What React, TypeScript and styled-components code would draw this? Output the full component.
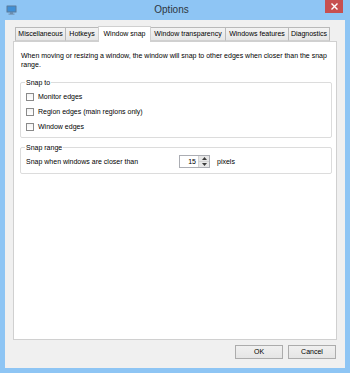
import React from 'react';
import styled, { createGlobalStyle } from 'styled-components';

const GlobalStyle = createGlobalStyle`
  html, body {
    margin: 0;
    padding: 0;
  }
  body {
    font-family: "Liberation Sans", Arial, sans-serif;
    color: #000;
  }
`;

const tabs = [
  { label: 'Miscellaneous', width: 51 },
  { label: 'Hotkeys', width: 34 },
  { label: 'Window snap', width: 53, active: true },
  { label: 'Window transparency', width: 76 },
  { label: 'Windows features', width: 64 },
  { label: 'Diagnostics', width: 42 },
];

const snapTargets = ['Monitor edges', 'Region edges (main regions only)', 'Window edges'];

function AppIcon() {
  return (
    <svg width="11" height="10" viewBox="0 0 11 10">
      <rect x="0.5" y="0.5" width="10" height="7" rx="0.5" fill="#5d7a98" />
      <rect x="1.5" y="1.5" width="8" height="5" fill="#3f8fd6" />
      <rect x="4" y="7.5" width="3" height="1.2" fill="#5d7a98" />
      <rect x="2.5" y="8.6" width="6" height="1" fill="#6f8aa6" />
    </svg>
  );
}

function CloseGlyph() {
  return (
    <svg width="7" height="7" viewBox="0 0 7 7">
      <path d="M1 1 L6 6 M6 1 L1 6" stroke="#fff" strokeWidth="1.4" strokeLinecap="square" />
    </svg>
  );
}

function Arrow({ down }: { down?: boolean }) {
  return (
    <svg width="5" height="3" viewBox="0 0 5 3">
      <path d={down ? 'M0 0 L5 0 L2.5 3 Z' : 'M0 3 L5 3 L2.5 0 Z'} fill="#3c3c3c" />
    </svg>
  );
}

export default function App() {
  return (
    <>
      <GlobalStyle />
      <Window>
        <TitleBar>
          <IconSlot>
            <AppIcon />
          </IconSlot>
          <Title>Options</Title>
          <CloseButton>
            <CloseGlyph />
          </CloseButton>
        </TitleBar>

        <Client>
          <TabStrip>
            {tabs.map((t) => (
              <Tab key={t.label} $w={t.width} $active={!!t.active}>
                {t.label}
              </Tab>
            ))}
          </TabStrip>

          <Panel>
            <Description>
              When moving or resizing a window, the window will snap to other edges when closer than the snap
              <br />
              range.
            </Description>

            <Group>
              <Legend>Snap to</Legend>
              {snapTargets.map((label) => (
                <CheckRow key={label}>
                  <CheckBox />
                  <span>{label}</span>
                </CheckRow>
              ))}
            </Group>

            <Group $gap={5}>
              <Legend>Snap range</Legend>
              <RangeRow>
                <RangeLabel>Snap when windows are closer than</RangeLabel>
                <Spinner>
                  <SpinValue>15</SpinValue>
                  <SpinButtons>
                    <SpinHalf>
                      <Arrow />
                    </SpinHalf>
                    <SpinHalf>
                      <Arrow down />
                    </SpinHalf>
                  </SpinButtons>
                </Spinner>
                <Unit>pixels</Unit>
              </RangeRow>
            </Group>
          </Panel>

          <ButtonRow>
            <DialogButton>OK</DialogButton>
            <DialogButton>Cancel</DialogButton>
          </ButtonRow>
        </Client>
      </Window>
    </>
  );
}

const Window = styled.div`
  width: 350px;
  height: 373px;
  background: #8ec5f4;
  display: flex;
  flex-direction: column;
  box-sizing: border-box;
`;

const TitleBar = styled.div`
  height: 20px;
  display: flex;
  align-items: flex-start;
  flex-shrink: 0;
`;

const IconSlot = styled.div`
  width: 11px;
  height: 10px;
  margin: 5px 0 0 6px;
  display: flex;
`;

const Title = styled.div`
  flex: 1;
  text-align: center;
  font-size: 10px;
  line-height: 20px;
  color: #2d3540;
  padding-left: 1px;
`;

const CloseButton = styled.div`
  width: 18px;
  height: 13px;
  margin-right: 7px;
  background: #c75050;
  display: flex;
  align-items: center;
  justify-content: center;
`;

const Client = styled.div`
  flex: 1;
  margin: 0 5px 5px;
  background: #f0f0f0;
  padding: 7px 8px 9px;
  display: flex;
  flex-direction: column;
  min-height: 0;
`;

const TabStrip = styled.div`
  display: flex;
  align-items: flex-end;
  padding-left: 2px;
  height: 14px;
`;

const Tab = styled.div<{ $w: number; $active: boolean }>`
  position: relative;
  box-sizing: border-box;
  width: ${(p) => p.$w}px;
  height: ${(p) => (p.$active ? 16 : 14)}px;
  margin-right: -1px;
  margin-bottom: ${(p) => (p.$active ? -1 : 0)}px;
  z-index: ${(p) => (p.$active ? 2 : 1)};
  border: 1px solid ${(p) => (p.$active ? '#d0d0d0' : '#b9b9b9')};
  border-bottom: ${(p) => (p.$active ? 'none' : '1px solid #d0d0d0')};
  background: ${(p) => (p.$active ? '#fff' : 'linear-gradient(#f3f3f3, #e6e6e6)')};
  font-size: 7px;
  line-height: ${(p) => (p.$active ? 13 : 12)}px;
  text-align: center;
  white-space: nowrap;
  overflow: hidden;
`;

const Panel = styled.div`
  flex: 1;
  background: #fff;
  border: 1px solid #d0d0d0;
  padding: 9px 4px 0 7px;
  font-size: 7px;
  line-height: 9px;
`;

const Description = styled.div`
  white-space: nowrap;
  margin-bottom: 9px;
`;

const Group = styled.fieldset<{ $gap?: number }>`
  margin: ${(p) => p.$gap ?? 0}px 0 0 -1px;
  padding: 2px 5px 3px;
  border: 1px solid #dcdcdc;
  border-radius: 2px;
  min-width: 0;
  width: 312px;
  box-sizing: border-box;
`;

const Legend = styled.legend`
  padding: 0 1px;
  margin-left: -1px;
  font-size: 7px;
  line-height: 9px;
`;

const CheckRow = styled.div`
  height: 15px;
  display: flex;
  align-items: center;
  gap: 4px;
`;

const CheckBox = styled.div`
  width: 8px;
  height: 8px;
  box-sizing: border-box;
  border: 1px solid #8a8a8a;
  background: linear-gradient(#f4f4f4, #ffffff);
`;

const RangeRow = styled.div`
  height: 15px;
  display: flex;
  align-items: center;
  padding-bottom: 1px;
`;

const RangeLabel = styled.span`
  width: 153px;
`;

const Spinner = styled.div`
  width: 31px;
  height: 13px;
  box-sizing: border-box;
  border: 1px solid #abadb3;
  background: #fff;
  display: flex;
`;

const SpinValue = styled.div`
  flex: 1;
  text-align: right;
  padding-right: 2px;
  line-height: 11px;
`;

const SpinButtons = styled.div`
  width: 10px;
  display: flex;
  flex-direction: column;
  background: #e8e8e8;
  border-left: 1px solid #d4d4d4;
`;

const SpinHalf = styled.div`
  flex: 1;
  display: flex;
  align-items: center;
  justify-content: center;
  & + & {
    border-top: 1px solid #d4d4d4;
  }
`;

const Unit = styled.span`
  margin-left: 7px;
`;

const ButtonRow = styled.div`
  display: flex;
  justify-content: flex-end;
  gap: 5px;
  margin: 5px 1px 0 0;
`;

const DialogButton = styled.div`
  width: 48px;
  height: 14px;
  box-sizing: border-box;
  border: 1px solid #acacac;
  background: linear-gradient(#f0f0f0, #e5e5e5);
  font-size: 7px;
  line-height: 12px;
  text-align: center;
`;
